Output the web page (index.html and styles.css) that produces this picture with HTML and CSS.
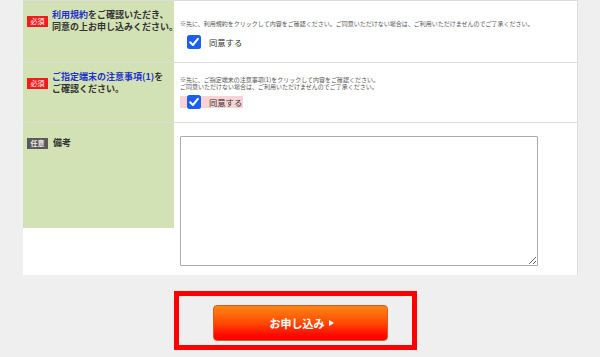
FILE: index.html
```html
<!DOCTYPE html>
<html lang="ja">
<head>
<meta charset="utf-8">
<title>お申し込み</title>
<link rel="stylesheet" href="styles.css">
</head>
<body>
<div class="form">
  <div class="row r1">
    <div class="th">
      <div class="head">
        <span class="badge req">必須</span>
        <p class="lbl"><a href="#" class="lnk">利用規約</a>をご確認いただき、<br>同意の上お申し込みください。</p>
      </div>
    </div>
    <div class="td td1">
      <p class="note">※先に、利用規約をクリックして内容をご確認ください。ご同意いただけない場合は、ご利用いただけませんのでご了承ください。</p>
      <label class="agree">
        <span class="cb"><svg viewBox="0 0 14 14" width="14" height="14"><rect x="0" y="0" width="14" height="14" rx="2.5" fill="#1a5ff0"/><path d="M3.2 7.3 L5.9 10 L10.9 3.8" fill="none" stroke="#fff" stroke-width="2" stroke-linecap="round" stroke-linejoin="round"/></svg></span>
        <span class="agree-txt">同意する</span>
      </label>
    </div>
  </div>
  <div class="row r2">
    <div class="th">
      <div class="head">
        <span class="badge req">必須</span>
        <p class="lbl"><a href="#" class="lnk">ご指定端末の注意事項(1)</a>を<br>ご確認ください。</p>
      </div>
    </div>
    <div class="td td2">
      <p class="note">※先に、ご指定端末の注意事項(1)をクリックして内容をご確認ください。</p>
      <p class="note">ご同意いただけない場合は、ご利用いただけませんのでご了承ください。</p>
      <label class="agree warn">
        <span class="cb"><svg viewBox="0 0 14 14" width="14" height="14"><rect x="0" y="0" width="14" height="14" rx="2.5" fill="#1a5ff0"/><path d="M3.2 7.3 L5.9 10 L10.9 3.8" fill="none" stroke="#fff" stroke-width="2" stroke-linecap="round" stroke-linejoin="round"/></svg></span>
        <span class="agree-txt">同意する</span>
      </label>
    </div>
  </div>
  <div class="row r3">
    <div class="th th3">
      <div class="head">
        <span class="badge opt">任意</span>
        <p class="lbl">備考</p>
      </div>
    </div>
    <div class="td td3">
      <textarea class="memo"></textarea>
    </div>
  </div>
</div>
<div class="submit-wrap">
  <div class="submit-box">
    <button type="button" class="submit">お申し込み<span class="tri"></span></button>
  </div>
</div>
</body>
</html>
```
FILE: styles.css
```css
html, body {
  margin: 0;
  padding: 0;
  background: #efefef;
  font-family: "Noto Sans CJK JP", "Noto Sans", sans-serif;
  color: #333;
}

.form {
  margin: 0 22px 0 23px;
  background: #fff;
  border-top: 1px solid #dcdcdc;
  border-right: 1px solid #dcdcdc;
}

.row {
  display: grid;
  grid-template-columns: 151px 1fr;
  border-bottom: 1px solid #dcdcdc;
}

.r1 { height: 61px; }
.r2 { height: 59px; }
.r3 { height: 152px; border-bottom: none; }

.th {
  background: #d2e2b4;
  padding: 8px 0 0 4px;
  box-sizing: border-box;
}

.th3 {
  align-self: start;
  height: 105px;
  padding-top: 14px;
}

.head {
  display: flex;
  align-items: center;
}

.badge {
  display: inline-flex;
  align-items: center;
  justify-content: center;
  width: 21px;
  height: 11px;
  font-size: 7px;
  line-height: 11px;
  color: #fff;
  flex-shrink: 0;
  margin-right: 4px;
}

.badge.req { background: #ee1c1c; }
.badge.opt { background: #5a5a5a; color: #eee; font-weight: bold; margin-right: 5px; }

.lbl {
  margin: 0;
  font-size: 9px;
  line-height: 12px;
  font-weight: bold;
  color: #333;
  white-space: nowrap;
}

.lnk {
  color: #2230cc;
  text-decoration: none;
}

.td {
  padding-left: 6px;
}

.td1 { padding-top: 19px; }
.td2 { padding-top: 13px; }
.td3 { padding-top: 13px; }

.note {
  margin: 0;
  font-size: 6px;
  line-height: 7px;
  height: 7px;
  overflow: visible;
  color: #555;
  white-space: nowrap;
}

.agree {
  display: inline-flex;
  align-items: center;
  height: 12px;
  padding: 0 1px 0 7px;
  margin-top: 9px;
}

.td2 .agree { margin-top: 5px; }

.agree.warn { background: #fad3d6; }

.cb {
  display: block;
  width: 14px;
  height: 14px;
  margin: -1px 0;
}

.cb svg { display: block; }

.agree-txt {
  margin-left: 8px;
  font-size: 8.3px;
  line-height: 12px;
  color: #333;
}

.memo {
  display: block;
  width: 358px;
  height: 130px;
  box-sizing: border-box;
  border: 1px solid #ababab;
  border-radius: 1px;
  margin: 0;
  padding: 2px;
  background: #fff;
}

.submit-wrap {
  padding-top: 16px;
  padding-left: 174px;
}

.submit-box {
  width: 243px;
  height: 59px;
  box-sizing: border-box;
  border: 5px solid #ff0000;
  padding: 9px 0 0 34px;
}

.submit {
  display: flex;
  align-items: center;
  justify-content: center;
  width: 175px;
  height: 36px;
  box-sizing: border-box;
  border: 1px solid #e0591a;
  border-radius: 4px;
  background: linear-gradient(to bottom, #ff8614 0%, #ff4a05 50%, #ff0a00 85%, #ff0000 100%);
  color: #fff;
  font-family: "Noto Sans CJK JP", sans-serif;
  font-weight: bold;
  font-size: 11px;
  padding: 0 0 0 2px;
  margin: 0;
  cursor: pointer;
}

.tri {
  display: inline-block;
  width: 0;
  height: 0;
  border-top: 3px solid transparent;
  border-bottom: 3px solid transparent;
  border-left: 5px solid #fff;
  margin-left: 4px;
}
```
